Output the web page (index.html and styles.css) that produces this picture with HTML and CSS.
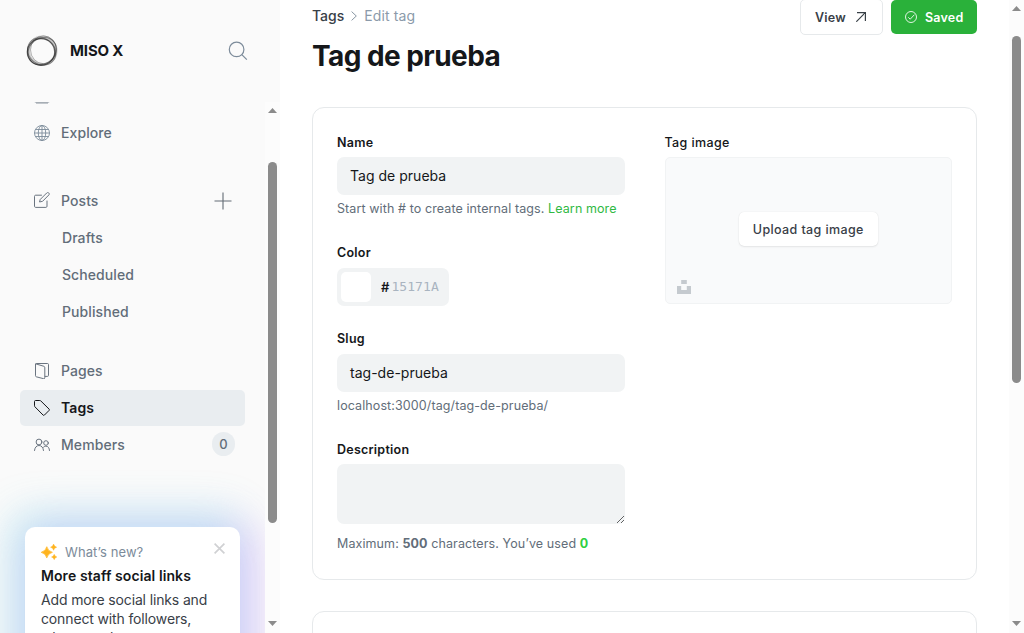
FILE: index.html
```html
<!DOCTYPE html>
<html lang="en">
<head>
<meta charset="utf-8">
<title>Edit tag</title>
<link rel="stylesheet" href="styles.css">
</head>
<body>
<div class="app">
  <aside class="sidebar">
    <header class="brand">
      <svg class="logo" viewBox="0 0 32 32" fill="none" stroke="#222">
        <ellipse cx="15" cy="17" rx="13.700" ry="13.300" stroke-width="1.200" stroke-opacity=".7"/>
        <ellipse cx="17.500" cy="14.800" rx="13" ry="13.900" stroke-width="1" stroke-opacity=".35"/>
        <ellipse cx="16" cy="16.200" rx="15" ry="12.600" stroke-width="1" stroke-opacity=".45" transform="rotate(-38 16 16)"/>
        <ellipse cx="16" cy="16.500" rx="14.800" ry="13" stroke-width="1" stroke-opacity=".45" transform="rotate(38 16 16)"/>
        <ellipse cx="16.300" cy="15.700" rx="13.800" ry="13.800" stroke-width="2.800" stroke-opacity=".22"/>
      </svg>
      <span class="brand-name">MISO X</span>
      <svg class="search" viewBox="0 0 20 20" fill="none" stroke="#7c8b9a" stroke-width="1.2"><circle cx="8.6" cy="8.4" r="7.3"/><path d="M13.8 13.6l5 5"/></svg>
    </header>
    <div class="sidebar-body">
      <div class="sidebar-content">
        <nav class="nav">
          <a class="row clipped"><svg class="icon" viewBox="0 0 16 16" fill="none" stroke="#8a939d"><path d="M.8 14h14.400M2 15h12"/></svg></a>
          <a class="row explore"><svg class="icon" viewBox="0 0 16 16" fill="none" stroke="#7c8b9a" stroke-width=".9"><circle cx="8" cy="8" r="7.5"/><ellipse cx="8" cy="8" rx="3.7" ry="7.5"/><path d="M8 .5v15M.5 8h15M1.8 4.5h12.4M1.8 11.5h12.4"/></svg><span>Explore</span></a>
          <a class="row posts"><svg class="icon raised" viewBox="0 0 16 16" fill="none" stroke="#626d79" stroke-width=".95" stroke-linejoin="round" stroke-linecap="round"><path d="M7.5 3.2H1.6c-.6 0-1.1.5-1.1 1.1v10c0 .6.5 1.1 1.1 1.1h10.3c.6 0 1.1-.5 1.1-1.1V9"/><path d="M6.5 7.2l6.2-6.2c.6-.6 1.5-.6 2.1 0s.6 1.4 0 2L8.6 9.300l-2.700.600z"/></svg><span>Posts</span><svg class="plus" viewBox="0 0 18 18" stroke="#626b74" stroke-width="1.1"><path d="M9 .5v17M.5 9h17"/></svg></a>
          <a class="row child"><span>Drafts</span></a>
          <a class="row child"><span>Scheduled</span></a>
          <a class="row child last-child"><span>Published</span></a>
          <a class="row"><svg class="icon" viewBox="0 0 16 16" fill="none" stroke="#626d79" stroke-width=".95" stroke-linejoin="round"><path d="M1.500.900v11.800c0 .6.300.900.800 1.100l7.300 1.900c.7.200 1.200-.1 1.200-.8V4.700c0-.8-.3-1.200-.9-1.400L1.600.8c.2-.2.400-.3.700-.3h11.200c.6 0 1 .4 1 1v10.900c0 .6-.4 1-1 1h-2.700"/></svg><span>Pages</span></a>
          <a class="row active"><svg class="icon" viewBox="0 0 16 16" fill="none" stroke="#15171a" stroke-linejoin="round"><path d="M.5 1.500v4.300c0 .4.200.8.5 1.100l8.100 8.200c.4.400.900.400 1.300 0l4.700-4.700c.4-.4.400-.9 0-1.300L6.900 1C6.600.7 6.200.5 5.800.5H1.500c-.6 0-1 .4-1 1z"/></svg><span>Tags</span></a>
          <a class="row"><svg class="icon" viewBox="0 0 16 16" fill="none" stroke="#626d79" stroke-width=".95" stroke-linecap="round"><circle cx="5" cy="5" r="2.900"/><circle cx="12" cy="6" r="2.300"/><path d="M.5 13.500c.3-3 2-5 4.500-5s4.200 2 4.500 5M9.500 10.200c.7-.7 1.600-1 2.500-1 2.100 0 3.300 1.700 3.500 4.300"/></svg><span>Members</span><b class="badge">0</b></a>
        </nav>
        <section class="news">
          <div class="news-head">
            <svg class="sparkle" viewBox="0 0 16 16" fill="#ffb41f"><path d="M5.800 2.700q1.100 4.500 5.600 5.600-4.500 1.100-5.600 5.600Q4.700 9.400.2 8.300q4.500-1.100 5.600-5.600z" stroke="#ffb41f" stroke-width=".7" stroke-linejoin="round"/><path d="M12.600.1q.6 2.500 3.100 3.100-2.500.6-3.100 3.100-.6-2.500-3.100-3.100 2.500-.6 3.100-3.100zM13.200 10.300q.5 2.200 2.700 2.700-2.200.5-2.700 2.700-.5-2.200-2.700-2.700 2.200-.5 2.700-2.700z" stroke="#ffb41f" stroke-width=".4"/></svg>
            <span>What’s new?</span>
            <svg class="close" viewBox="0 0 11 11" stroke="#d0d1d3" stroke-width="1.700"><path d="M.6.6l9.800 9.800M10.400.6L.6 10.400"/></svg>
          </div>
          <h2>More staff social links</h2>
          <p>Add more social links and connect with followers, wherever they are.</p>
        </section>
      </div>
      <div class="scrollbar sidebar-scroll"><i class="up"></i><i class="thumb"></i><i class="down"></i></div>
    </div>
  </aside>
  <main class="main">
    <header class="top">
      <div>
        <div class="crumbs"><span>Tags</span><svg viewBox="0 0 6 10" fill="none" stroke="#7c8b9a" stroke-width=".9"><path d="M.6.6L5.300 5 .6 9.400"/></svg><span class="current">Edit tag</span></div>
        <h1>Tag de prueba</h1>
      </div>
      <div class="actions">
        <a class="btn view">View<svg viewBox="0 0 10 10" fill="none" stroke="#394047" stroke-width="1.200"><path d="M.3 9.700L9.300.7M1 .6h8.400V9"/></svg></a>
        <a class="btn saved"><svg viewBox="0 0 12 12" fill="none" stroke="#fff" stroke-width=".85"><circle cx="6" cy="6" r="5.500"/><path d="M3.300 6.300l1.900 1.900 4.200-4.500"/></svg>Saved</a>
      </div>
    </header>
    <section class="card">
      <div class="fields">
        <div class="field name"><label>Name</label><div class="input">Tag de prueba</div><p class="hint">Start with # to create internal tags. <a>Learn more</a></p></div>
        <div class="field color"><label>Color</label><div class="input color-input"><i class="swatch"></i><span class="hash">#</span><span class="hex">15171A</span></div></div>
        <div class="field slug"><label>Slug</label><div class="input">tag-de-prueba</div><p class="hint">localhost:3000/tag/tag-de-prueba/</p></div>
        <div class="field desc"><label>Description</label><textarea class="area"></textarea><p class="hint">Maximum: <b>500</b> characters. You’ve used <b class="count">0</b></p></div>
      </div>
      <div class="image-field">
        <label>Tag image</label>
        <div class="uploader"><span class="upload">Upload tag image</span>
          <svg class="unsplash" viewBox="0 0 14 14" fill="#c5cacf"><path d="M4.200 0h5.600v4H4.200zM9.800 6H14v8H0V6h4.200v4h5.600z"/></svg>
        </div>
      </div>
    </section>
    <section class="card next"></section>
  </main>
  <div class="scrollbar page-scroll"><i class="up"></i><i class="thumb"></i><i class="down"></i></div>
</div>
</body>
</html>
```
FILE: styles.css
```css
* { box-sizing: border-box; }
body { margin: 0; overflow: hidden; background: #fff; color: #15171a; font-family: Inter, "Liberation Sans", sans-serif; }
h1, h2, p { margin: 0; }
svg { display: block; flex: none; }
label { display: block; height: 20px; font-size: 12.5px; font-weight: 600; letter-spacing: .24px; line-height: 22px; }
.app { display: flex; height: 633px; }

/* Sidebar */
.sidebar { display: flex; flex-direction: column; width: 280px; background: #fafafa; }
.brand { display: flex; align-items: center; height: 102px; padding: 0 32px 0 26px; }
.logo { width: 32px; height: 32px; }
.brand-name { flex: 1; margin-left: 12px; padding-bottom: 2px; font-size: 15px; font-weight: 700; letter-spacing: -.15px; }
.search { width: 20px; height: 20px; }
.sidebar-body { display: flex; height: 531px; }
.sidebar-content { width: 265px; overflow: hidden; }
.nav { padding: 0 20px; margin-top: -24px; }
.row { display: flex; align-items: center; height: 36px; margin-bottom: 1px; padding: 0 14px; border-radius: 5px; color: #626d79; font-size: 14px; font-weight: 500; letter-spacing: .08px; }
.row span { line-height: 18px; padding-bottom: 1px; }
.icon { width: 16px; height: 16px; margin-right: 11px; }
.raised { margin-bottom: 2px; }
.clipped { align-items: flex-start; padding-top: 10px; }
.explore { margin-bottom: 32px; }
.plus { width: 18px; height: 18px; margin: 0 -1px 0 auto; }
.child { padding-left: 42px; }
.last-child { margin-bottom: 23px; }
.active { background: #e9edf0; color: #15171a; font-weight: 600; }
.badge { display: flex; align-items: center; justify-content: center; width: 23px; height: 24px; margin: -2px -4px 0 auto; border-radius: 12px; background: #e9edf0; font-size: 13px; font-weight: 500; }
.news { width: 215px; height: 180px; margin: 64px 0 0 25px; padding: 16px; border-radius: 10px; background: #fff; box-shadow: -7px -6px 42px 8px rgb(75 225 226 / 28%), 7px 6px 42px 8px rgb(202 103 255 / 32%); }
.news-head { display: flex; align-items: center; height: 17px; color: #7c8b9a; font-size: 13px; letter-spacing: .1px; }
.sparkle { width: 16px; height: 16px; margin-right: 8px; }
.close { width: 11px; height: 11px; margin: -6px -1px 0 auto; }
.news h2 { margin-top: 6px; font-size: 14px; font-weight: 600; letter-spacing: .09px; line-height: 20px; }
.news p { margin-top: 4px; color: #394047; font-size: 14px; letter-spacing: -.14px; line-height: 19px; }

/* Scrollbars */
.scrollbar { display: flex; flex-direction: column; align-items: center; width: 15px; padding: 6px 0 7px; background: #fcfcfc; }
.scrollbar i { width: 9px; background: #8b8b8b; }
.up, .down { height: 5px; }
.up { clip-path: polygon(50% 0, 100% 100%, 0 100%); }
.down { margin-top: auto; clip-path: polygon(0 0, 100% 0, 50% 100%); }
.thumb { border-radius: 5px; }
.sidebar-scroll .thumb { height: 361px; margin-top: 49px; }
.page-scroll .thumb { height: 347px; margin-top: 25px; }

/* Page header */
.main { width: 729px; padding: 0 32px; overflow: hidden; }
.top { display: flex; justify-content: space-between; height: 107px; }
.crumbs { display: flex; align-items: center; height: 20px; margin-top: 6px; color: #394047; font-size: 14px; font-weight: 500; line-height: 18px; }
.crumbs span { padding-bottom: 1px; }
.crumbs svg { width: 6px; height: 10px; margin: 0 7px 0 7px; }
.crumbs .current { color: #8b9aaa; font-weight: 400; letter-spacing: .12px; }
h1 { margin-top: 11px; font-size: 28px; font-weight: 700; letter-spacing: -.56px; line-height: 38px; }
.actions { display: flex; gap: 8px; }
.btn { display: flex; align-items: center; height: 34px; border-radius: 5px; font-size: 12.5px; font-weight: 600; letter-spacing: .2px; }
.view { height: 36px; margin-top: -1px; padding: 0 14px 0 14px; width: 83px; justify-content: space-between; border: 1px solid #e6e9eb; color: #394047; }
.view svg { width: 10px; height: 10px; margin-right: 2px; }
.saved { width: 86px; padding-left: 14px; background: #2ab13a; color: #fff; }
.saved svg { width: 12px; height: 12px; margin-right: 8px; }

/* Tag form */
.card { display: grid; grid-template-columns: 1fr 1fr; gap: 40px; height: 473px; padding: 24px; border: 1px solid #e6e9eb; border-radius: 12px; }
.next { margin-top: 31px; height: 60px; }
.image-field label { font-weight: 500; letter-spacing: .38px; }
.field .input { display: flex; align-items: center; height: 38px; margin-top: 5px; padding: 0 13px 1px; border-radius: 7px; background: #f1f3f4; font-size: 14px; letter-spacing: .02px; }
.hint { margin-top: 4px; color: #626d79; font-size: 12.5px; letter-spacing: .1px; line-height: 20px; }
.hint a { color: #30b943; }
.hint .count { color: #30cf43; }
.color { margin-top: 23px; }
.field .color-input { width: 112px; margin-top: 6px; padding: 0 4px; }
.swatch { width: 30px; height: 30px; border-radius: 5px; background: #fff; }
.hash { margin: 0 2px 0 10px; font-size: 13px; font-weight: 600; }
.hex { padding-bottom: 1px; color: #a9b4c0; font-family: "DejaVu Sans Mono", monospace; font-size: 13px; letter-spacing: .08px; }
.slug { margin-top: 22px; }
.slug .input { margin-top: 6px; }
.desc { margin-top: 23px; }
.area { display: block; width: 100%; height: 60px; margin-top: 5px; border: 0; border-radius: 7px; background: #f1f3f4; }
.desc .hint { margin-top: 10px; }
.uploader { display: flex; position: relative; align-items: center; justify-content: center; height: 147px; margin-top: 5px; border: 1px solid #f1f3f4; border-radius: 5px; background: #f9fafb; }
.upload { height: 34px; margin-top: -3px; padding: 0 14px; border-radius: 5px; background: #fff; box-shadow: 0 0 1px rgb(0 0 0 / 12%), 0 1px 2px rgb(0 0 0 / 8%); color: #394047; font-size: 12.5px; font-weight: 500; letter-spacing: .38px; line-height: 36px; }
.unsplash { position: absolute; left: 11px; bottom: 9px; width: 14px; height: 14px; }
```
